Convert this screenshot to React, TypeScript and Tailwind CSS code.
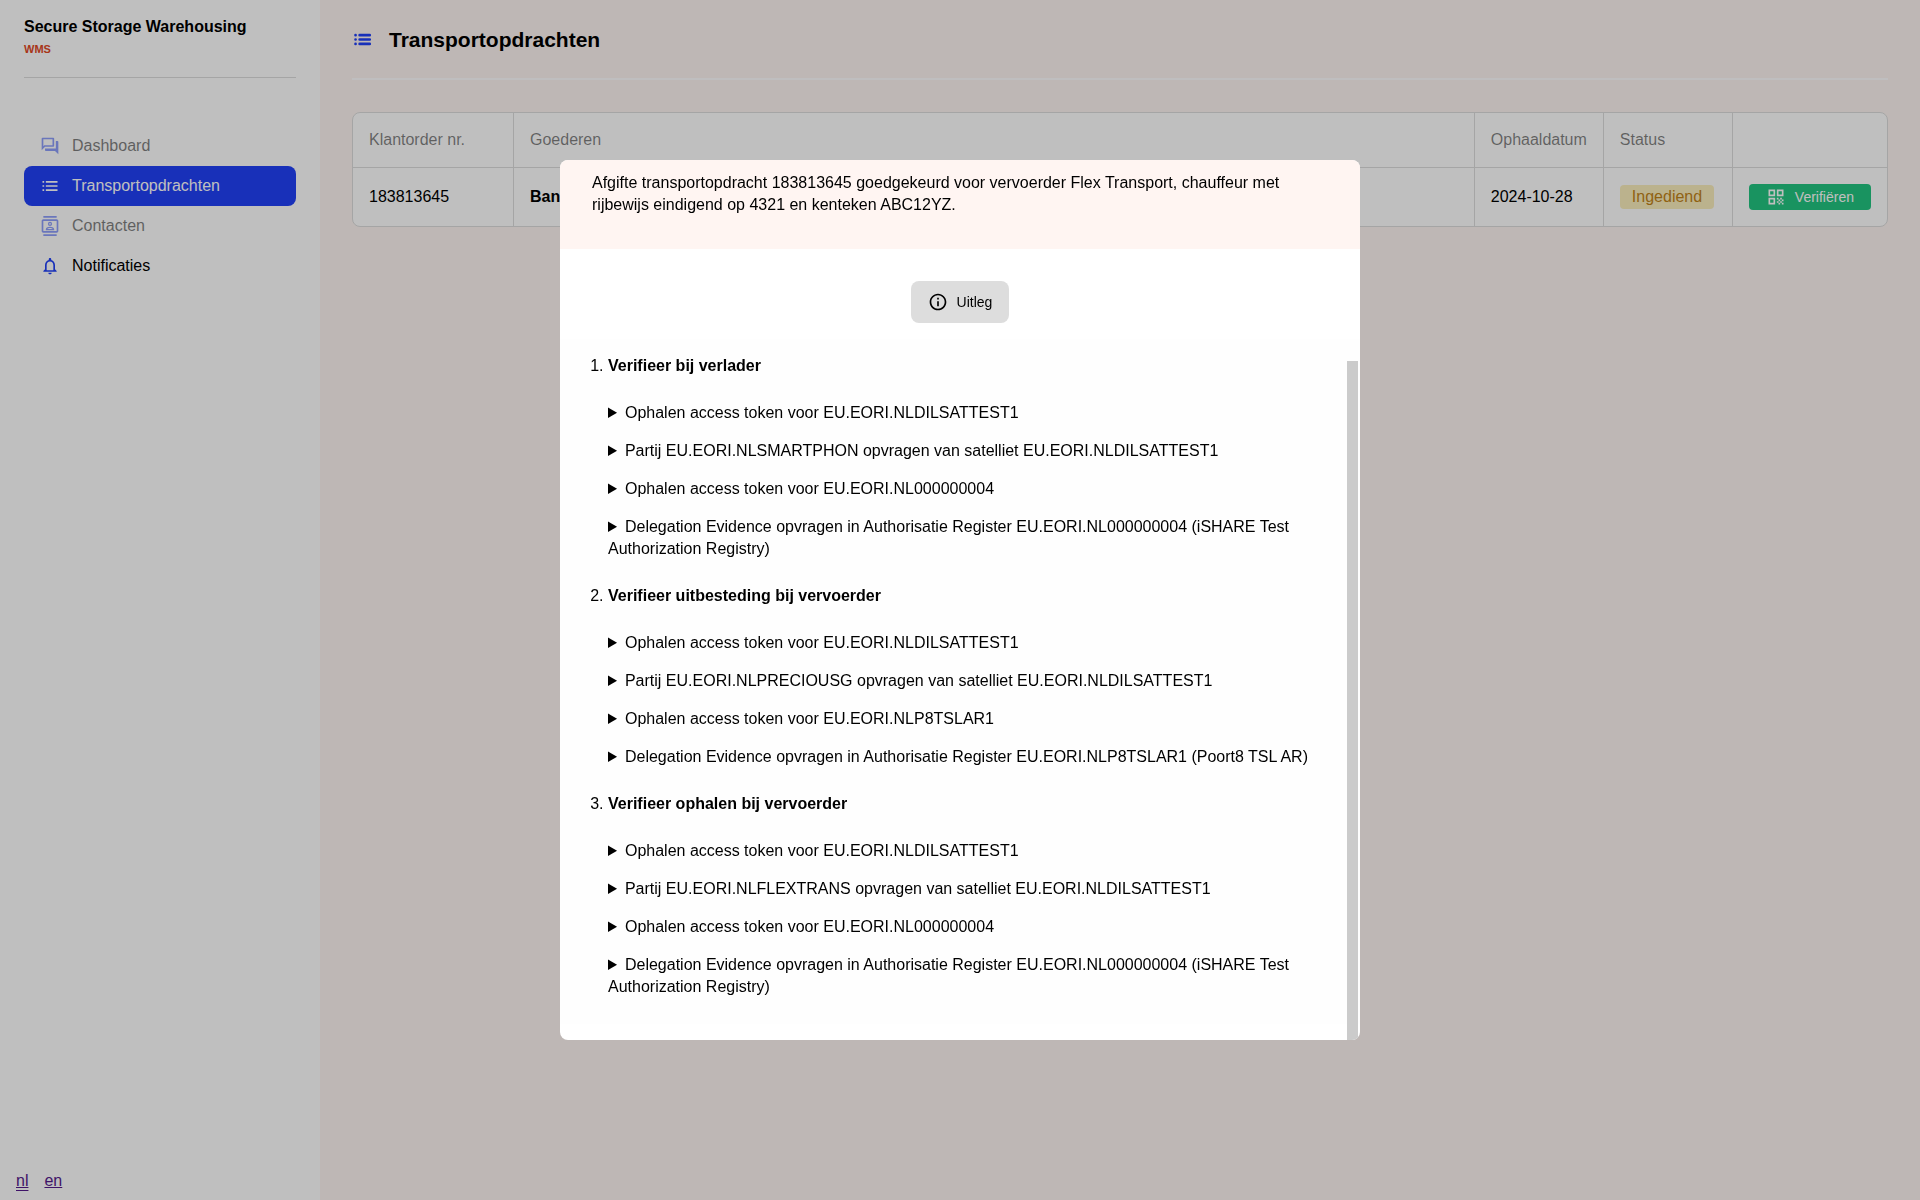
import type { ReactNode } from "react";
import {
  MdInfoOutline,
  MdNotificationsNone,
  MdOutlineContacts,
  MdOutlineQuestionAnswer,
  MdQrCode,
} from "react-icons/md";

function ListIcon({ className }: { className?: string }) {
  return (
    <svg viewBox="0 0 24 24" className={className} stroke="currentColor" strokeWidth="2" aria-hidden="true">
      <path d="M3 7h2M3 12h2M3 17h2M7 7h14M7 12h14M7 17h14" />
    </svg>
  );
}

function BoldListIcon({ className }: { className?: string }) {
  return (
    <svg viewBox="0 0 24 24" className={className} stroke="currentColor" strokeWidth="3" strokeLinecap="round" aria-hidden="true">
      <path d="M4 7h.1M4 12h.1M4 17h.1M8.7 7h11.6M8.7 12h11.6M8.7 17h11.6" />
    </svg>
  );
}

const navItems: { label: string; icon: ReactNode; style: string; iconStyle: string }[] = [
  { label: "Dashboard", icon: <MdOutlineQuestionAnswer size={20} />, style: "opacity-50", iconStyle: "text-[#2040f7]" },
  { label: "Transportopdrachten", icon: <ListIcon className="size-5" />, style: "bg-[#2040f7] text-white", iconStyle: "text-white" },
  { label: "Contacten", icon: <MdOutlineContacts size={20} />, style: "opacity-50", iconStyle: "text-[#2040f7]" },
  { label: "Notificaties", icon: <MdNotificationsNone size={20} />, style: "", iconStyle: "text-[#2040f7]" },
];

const steps = [
  {
    title: "Verifieer bij verlader",
    requests: [
      "Ophalen access token voor EU.EORI.NLDILSATTEST1",
      "Partij EU.EORI.NLSMARTPHON opvragen van satelliet EU.EORI.NLDILSATTEST1",
      "Ophalen access token voor EU.EORI.NL000000004",
      "Delegation Evidence opvragen in Authorisatie Register EU.EORI.NL000000004 (iSHARE Test Authorization Registry)",
    ],
  },
  {
    title: "Verifieer uitbesteding bij vervoerder",
    requests: [
      "Ophalen access token voor EU.EORI.NLDILSATTEST1",
      "Partij EU.EORI.NLPRECIOUSG opvragen van satelliet EU.EORI.NLDILSATTEST1",
      "Ophalen access token voor EU.EORI.NLP8TSLAR1",
      "Delegation Evidence opvragen in Authorisatie Register EU.EORI.NLP8TSLAR1 (Poort8 TSL AR)",
    ],
  },
  {
    title: "Verifieer ophalen bij vervoerder",
    requests: [
      "Ophalen access token voor EU.EORI.NLDILSATTEST1",
      "Partij EU.EORI.NLFLEXTRANS opvragen van satelliet EU.EORI.NLDILSATTEST1",
      "Ophalen access token voor EU.EORI.NL000000004",
      "Delegation Evidence opvragen in Authorisatie Register EU.EORI.NL000000004 (iSHARE Test Authorization Registry)",
    ],
  },
];

function Sidebar() {
  return (
    <aside className="flex w-80 shrink-0 flex-col bg-white">
      <div className="mx-6 border-b border-[#ddd] pt-[17px] pb-5">
        <div className="leading-5 font-bold">Secure Storage Warehousing</div>
        <div className="mt-1 text-[11px] leading-4 font-bold text-[#e0481f]">WMS</div>
      </div>
      <nav className="mx-6 mt-12">
        <ul>
          {navItems.map((item) => (
            <li key={item.label}>
              <a href="#" className={`flex h-10 items-center gap-3 rounded-lg px-4 ${item.style}`}>
                <span className={item.iconStyle}>{item.icon}</span>
                {item.label}
              </a>
            </li>
          ))}
        </ul>
      </nav>
      <div className="mt-auto flex gap-4 px-4 pb-[7px] text-[#551a8b]">
        <a href="#nl" className="underline decoration-double">nl</a>
        <a href="#en" className="underline">en</a>
      </div>
    </aside>
  );
}

function Orders() {
  const head = "border-l border-[#ddd] px-4 text-left font-normal text-black/50 first:border-l-0";
  const cell = "border-t border-l border-[#ddd] px-4 first:border-l-0";
  return (
    <div className="overflow-hidden rounded-lg border border-[#ddd] bg-white">
      <table className="w-full border-separate border-spacing-0">
        <thead>
          <tr className="h-[54px]">
            <th className={`${head} w-40`}>Klantorder nr.</th>
            <th className={head}>Goederen</th>
            <th className={`${head} w-px`}>Ophaaldatum</th>
            <th className={`${head} w-[129px]`}>Status</th>
            <th className={`${head} w-px`} aria-label="Acties" />
          </tr>
        </thead>
        <tbody>
          <tr className="h-[59px]">
            <td className={cell}>183813645</td>
            <td className={cell}><strong>Bananen</strong></td>
            <td className={`${cell} whitespace-nowrap`}>2024-10-28</td>
            <td className={cell}>
              <span className="inline-block rounded bg-[#faeebd] px-3 leading-6 text-[#c08319]">Ingediend</span>
            </td>
            <td className={cell}>
              <button type="button" className="flex h-[26px] items-center gap-[9px] rounded bg-[#22c580] px-[17px] text-sm text-white">
                <MdQrCode size={20} />
                Verifiëren
              </button>
            </td>
          </tr>
        </tbody>
      </table>
    </div>
  );
}

function ExplanationDialog() {
  return (
    <div className="fixed inset-0 flex items-center justify-center bg-black/25">
      <div role="dialog" aria-label="Uitleg" className="relative w-[800px] max-w-full overflow-hidden rounded-lg bg-white leading-[22px]">
        <p className="bg-[#fff5f2] px-8 pt-3 pb-[33px]">
          Afgifte transportopdracht 183813645 goedgekeurd voor vervoerder Flex Transport, chauffeur met rijbewijs
          eindigend op 4321 en kenteken ABC12YZ.
        </p>
        <div className="flex justify-center pt-8 pb-4">
          <button type="button" className="flex h-[42px] items-center gap-[9px] rounded-lg bg-[#ddd] px-[17px] text-sm">
            <MdInfoOutline size={20} />
            Uitleg
          </button>
        </div>
        <ol className="list-decimal bg-[#fefefe] pt-4 pr-12 pb-[26px] pl-12">
          {steps.map((step) => (
            <li key={step.title} className="mb-[25px] last:mb-0">
              <strong>{step.title}</strong>
              <div className="mt-[25px] flex flex-col gap-4">
                {step.requests.map((request) => (
                  <details key={request}>
                    <summary>{request}</summary>
                  </details>
                ))}
              </div>
            </li>
          ))}
        </ol>
        <div className="h-4" />
        <div className="absolute right-[2px] bottom-0 h-[679px] w-[11px] bg-[#cbcbcb]" />
      </div>
    </div>
  );
}

export default function App() {
  return (
    <div className="flex min-h-screen bg-[#fef5f2] font-['Liberation_Sans',Arial,sans-serif] text-base text-black">
      <Sidebar />
      <main className="min-w-0 flex-1 px-8">
        <header className="mb-8 flex h-20 items-center gap-4 border-b-2 border-[#fffeff] pt-px">
          <BoldListIcon className="size-[21px] text-[#2040f7]" />
          <h1 className="text-[21px] font-bold">Transportopdrachten</h1>
        </header>
        <Orders />
      </main>
      <ExplanationDialog />
    </div>
  );
}
